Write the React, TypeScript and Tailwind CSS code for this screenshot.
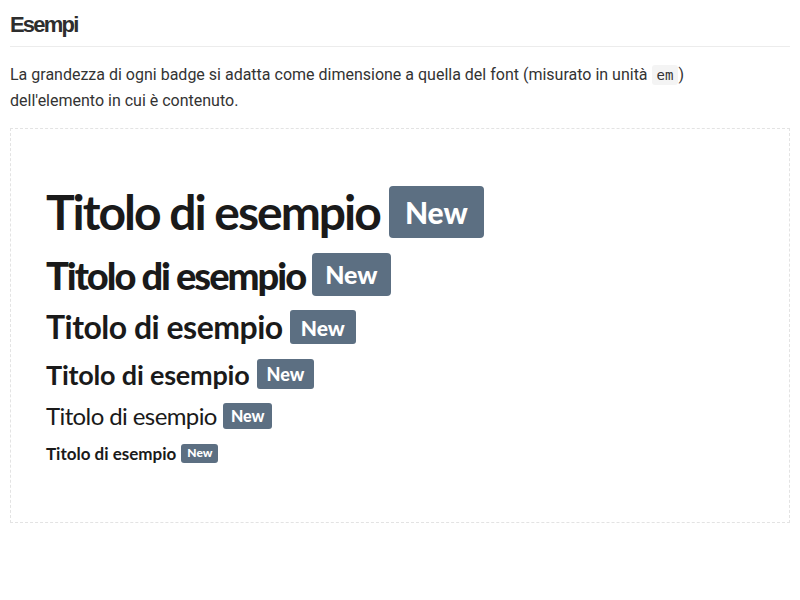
import React from 'react';

type Row = {
  title: string;
  badge: string;
  rowClass: string;
};

const rows: Row[] = [
  { title: 'text-[48px] font-bold tracking-[-2px]', badge: 'ml-[9px] text-[30px] px-[16px] h-[52px] rounded-[4px]', rowClass: 'h-[62px]' },
  { title: 'text-[38px] font-black tracking-[-2px]', badge: 'ml-[7px] text-[25px] px-[13px] h-[43px] rounded-[4px]', rowClass: 'h-[49px] mt-[7px]' },
  { title: 'text-[32px] font-bold tracking-[-0.5px]', badge: 'ml-[7px] text-[21px] px-[11px] h-[34px] rounded-[3px]', rowClass: 'h-[40px] mt-[8px]' },
  { title: 'text-[27px] font-bold tracking-[-0.2px]', badge: 'ml-[7px] text-[18px] px-[10px] h-[30px] rounded-[3px]', rowClass: 'h-[36px] mt-[9px]' },
  { title: 'text-[24px] font-normal tracking-[-0.6px]', badge: 'ml-[6px] text-[16px] px-[8px] h-[26px] rounded-[3px]', rowClass: 'h-[30px] mt-[9px]' },
  { title: 'text-[17px] font-bold tracking-[0px]', badge: 'ml-[5px] text-[12px] px-[6px] h-[19px] rounded-[3px]', rowClass: 'h-[24px] mt-[10px]' },
];

export default function App() {
  return (
    <div className="w-[800px] h-[600px] bg-white px-[10px] font-['Roboto',sans-serif]">
      <h2 className="pt-[14px] pb-[10px] border-b border-[#ececec] text-[22px] leading-[22px] font-bold tracking-[-1.8px] text-[#2e2e2e] font-['Liberation_Sans',Arial,sans-serif]">
        Esempi
      </h2>
      <p className="mt-[15px] text-[16px] leading-[26px] text-[#333]">
        La grandezza di ogni badge si adatta come dimensione a quella del font (misurato in unità{' '}
        <code className="px-[5px] py-[2px] rounded-[3px] bg-[#f4f4f4] text-[14px] text-[#333] font-['DejaVu_Sans_Mono',monospace]">em</code>
        )<br />
        dell'elemento in cui è contenuto.
      </p>
      <div className="mt-[14px] border border-dashed border-[#e3e3e3] pl-[35px] pt-[52px] pb-[57px] font-['Lato',sans-serif] text-[#1a1a1a]">
        {rows.map((r, i) => (
          <div key={i} className={`flex items-center ${r.rowClass}`}>
            <span className={`${r.title} leading-none`}>Titolo di esempio</span>
            <span className={`${r.badge} inline-flex items-center bg-[#5c6f82] text-white font-black leading-none font-['Lato',sans-serif]`}>
              New
            </span>
          </div>
        ))}
      </div>
    </div>
  );
}
